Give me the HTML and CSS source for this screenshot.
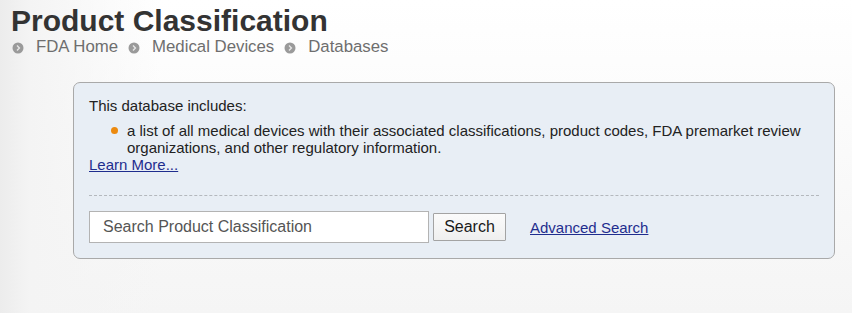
FILE: index.html
```html
<!DOCTYPE html>
<html lang="en">
<head>
<meta charset="utf-8">
<title>Product Classification</title>
<link rel="stylesheet" href="styles.css">
</head>
<body>
<div class="page">
  <h1 class="title">Product Classification</h1>
  <nav class="crumbs">
    <span class="crumb"><svg class="crumb-icon" viewBox="0 0 12 12" width="12" height="12"><circle cx="6" cy="6" r="5.5" fill="#9a9a9a"/><path d="M5 3.6 L7.4 6 L5 8.4" fill="none" stroke="#e6e6e6" stroke-width="1.4"/></svg><span>FDA Home</span></span>
    <span class="crumb"><svg class="crumb-icon" viewBox="0 0 12 12" width="12" height="12"><circle cx="6" cy="6" r="5.5" fill="#9a9a9a"/><path d="M5 3.6 L7.4 6 L5 8.4" fill="none" stroke="#e6e6e6" stroke-width="1.4"/></svg><span>Medical Devices</span></span>
    <span class="crumb"><svg class="crumb-icon" viewBox="0 0 12 12" width="12" height="12"><circle cx="6" cy="6" r="5.5" fill="#9a9a9a"/><path d="M5 3.6 L7.4 6 L5 8.4" fill="none" stroke="#e6e6e6" stroke-width="1.4"/></svg><span>Databases</span></span>
  </nav>
  <section class="box">
    <p class="intro">This database includes:</p>
    <ul class="list">
      <li>a list of all medical devices with their associated classifications, product codes, FDA premarket review organizations, and other regulatory information.</li>
    </ul>
    <a class="link" href="#">Learn More...</a>
    <hr class="divider">
    <form class="search" onsubmit="return false">
      <input class="search-input" type="text" placeholder="Search Product Classification">
      <button class="search-btn" type="submit">Search</button>
      <a class="link adv" href="#">Advanced Search</a>
    </form>
  </section>
</div>
</body>
</html>
```
FILE: styles.css
```css
html, body {
  margin: 0;
  padding: 0;
  height: 100%;
}
body {
  font-family: "Liberation Sans", Arial, sans-serif;
  background: linear-gradient(to right, #ececec 0, #f4f4f4 30px, rgba(244,244,244,0) 160px),
              linear-gradient(to bottom, #ffffff 0, #fcfcfc 90px, #f5f5f5 313px);
  background-color: #f8f8f8;
  overflow: hidden;
}
.page {
  padding: 4px 0 0 11px;
}
.title {
  margin: 0;
  font-size: 30px;
  line-height: 34px;
  font-weight: bold;
  color: #333;
}
.crumbs {
  display: flex;
  align-items: center;
  gap: 10px;
  margin-top: 0;
  height: 18px;
  font-size: 16.8px;
  line-height: 18px;
  color: #6e6e6e;
  padding-left: 1px;
}
.crumb {
  display: flex;
  align-items: center;
  gap: 12px;
}
.crumb-icon {
  display: block;
  flex: none;
  margin-top: 1px;
}
.box {
  margin: 26px 0 0 62px;
  width: 730px;
  border: 1px solid #a9a9a9;
  border-radius: 7px;
  background: #e8eef5;
  padding: 14px 15px 15px;
  font-size: 15px;
  line-height: 17px;
  color: #222;
}
.intro {
  margin: 0;
}
.list {
  list-style: none;
  margin: 8px 0 0;
  padding: 0 0 0 38px;
}
.list li {
  position: relative;
}
.list li::before {
  content: "";
  position: absolute;
  left: -16px;
  top: 5px;
  width: 7px;
  height: 7px;
  border-radius: 50%;
  background: #ec8a0f;
}
.link {
  color: #1f2d8e;
  text-decoration: underline;
}
.divider {
  margin: 22px 0 0;
  border: 0;
  border-top: 1px dashed #b4b8bd;
  height: 0;
}
.search {
  display: flex;
  align-items: center;
  margin: 15px 0 0;
}
.search-input {
  box-sizing: border-box;
  width: 340px;
  height: 32px;
  border: 1px solid #b3b3b3;
  background: #fff;
  padding: 0 0 0 13px;
  font-family: "Liberation Sans", Arial, sans-serif;
  font-size: 16px;
  color: #444;
}
.search-input::placeholder {
  color: #555;
  opacity: 1;
}
.search-btn {
  box-sizing: border-box;
  margin-left: 4px;
  width: 73px;
  height: 28px;
  border: 1px solid #a3a3a3;
  border-radius: 1px;
  background: linear-gradient(#fbfbfb, #efefef);
  font-family: "Liberation Sans", Arial, sans-serif;
  font-size: 16px;
  color: #1a1a1a;
  padding: 0;
}
.adv {
  margin-left: 24px;
  font-size: 15px;
}
```
